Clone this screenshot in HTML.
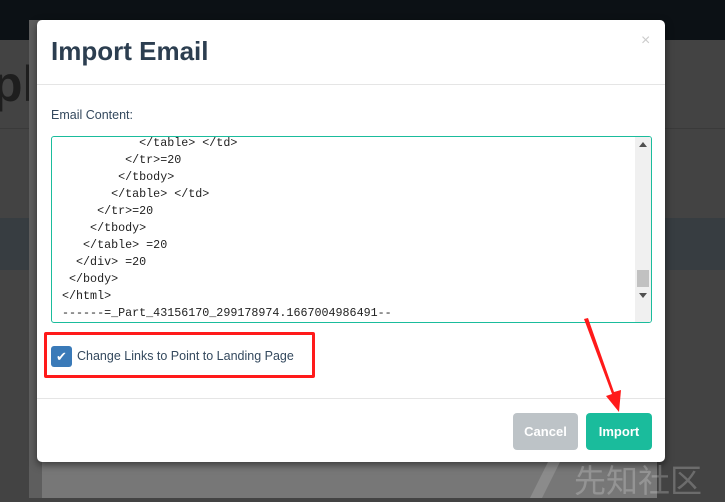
<!DOCTYPE html>
<html><head><meta charset="utf-8"><style>
*{margin:0;padding:0;box-sizing:border-box}
body{width:725px;height:498px;overflow:hidden;background:#434343;position:relative;font-family:"Liberation Sans",sans-serif}
.top{position:absolute;left:0;top:0;width:725px;height:40px;background:#0c1115}
.band{position:absolute;left:0;top:218px;width:725px;height:52px;background:#373d41}
.hl{position:absolute;left:0;top:128px;width:725px;height:1px;background:#3a3a3a}
.panel{position:absolute;left:29px;top:20px;width:628px;height:478px;background:#777}
.panel2{position:absolute;left:29px;top:20px;width:13px;height:478px;background:#5e5e5e}
.bigp{position:absolute;left:-8px;top:55px;font:bold 50px "Liberation Sans",sans-serif;color:#1e1e1e}
.modal{position:absolute;left:37px;top:20px;width:628px;height:442px;background:#fff;border-radius:5px;box-shadow:0 3px 8px rgba(0,0,0,.5)}
.title{position:absolute;left:14px;top:16px;font:bold 26px "Liberation Sans",sans-serif;color:#2c3e50}
.x{position:absolute;left:604px;top:12px;font-size:16px;color:#ccc}
.hb{position:absolute;left:0;top:64px;width:628px;height:1px;background:#e5e5e5}
.lbl{position:absolute;left:14px;top:88px;font-size:12.5px;color:#34495e}
.ta{position:absolute;left:14px;top:116px;width:601px;height:187px;border:1px solid #1abc9c;border-radius:3px;overflow:hidden}
.code{position:absolute;left:10px;top:-2px;font:11.7px/17px "Liberation Mono",monospace;color:#222;white-space:pre}
.sb{position:absolute;right:0;top:0;width:16px;height:185px;background:#f0f0f0}
.thumb{position:absolute;left:2px;top:133px;width:12px;height:17px;background:#c1c1c1}
.cb{position:absolute;left:14px;top:326px;width:21px;height:21px;background:#3a7ab8;border-radius:3px;color:#fff;font-size:13px;text-align:center;line-height:21px}
.cbl{position:absolute;left:40px;top:329px;font-size:12.5px;color:#34495e}
.red{position:absolute;left:7px;top:312px;width:271px;height:46px;border:3px solid #ff1a1a;border-radius:2px}
.fb{position:absolute;left:0;top:378px;width:628px;height:1px;background:#e5e5e5}
.btn{position:absolute;top:393px;height:37px;border-radius:4px;color:#fff;font-weight:bold;font-size:13px;text-align:center;line-height:37px}
.wm{position:absolute;left:574px;top:462px;font:32px/34px "Noto Sans CJK SC",sans-serif;color:rgba(255,255,255,.22)}
</style></head><body>
<div class="top"></div><div class="hl"></div><div class="band"></div>
<div class="bigp">pl</div>
<div class="panel"></div><div class="panel2"></div>
<div class="modal">
<div class="title">Import Email</div><div class="x">×</div>
<div class="hb"></div>
<div class="lbl">Email Content:</div>
<div class="ta"><div class="code">           &lt;/table&gt; &lt;/td&gt;
         &lt;/tr&gt;=20
        &lt;/tbody&gt;
       &lt;/table&gt; &lt;/td&gt;
     &lt;/tr&gt;=20
    &lt;/tbody&gt;
   &lt;/table&gt; =20
  &lt;/div&gt; =20
 &lt;/body&gt;
&lt;/html&gt;
------=_Part_43156170_299178974.1667004986491--</div>
<div class="sb"><div style="position:absolute;left:4px;top:5px;border:4px solid transparent;border-bottom:5px solid #505050;border-top:0"></div><div class="thumb"></div><div style="position:absolute;left:4px;top:156px;border:4px solid transparent;border-top:5px solid #505050;border-bottom:0"></div></div>
</div>
<div class="red"></div>
<div class="cb">✔</div>
<div class="cbl">Change Links to Point to Landing Page</div>
<div class="fb"></div>
<div class="btn" style="left:476px;width:65px;background:#bdc3c7">Cancel</div>
<div class="btn" style="left:549px;width:66px;background:#1abc9c">Import</div>
</div>
<svg style="position:absolute;left:0;top:0" width="725" height="498"><polygon points="584,319 588,318 614,392 621,390 619,412 606,396 612,394" fill="#ff1a1a"/><polygon points="530,498 548,462 560,462 542,498" fill="rgba(255,255,255,.15)"/></svg>
<div class="wm">先知社区</div>
</body></html>
